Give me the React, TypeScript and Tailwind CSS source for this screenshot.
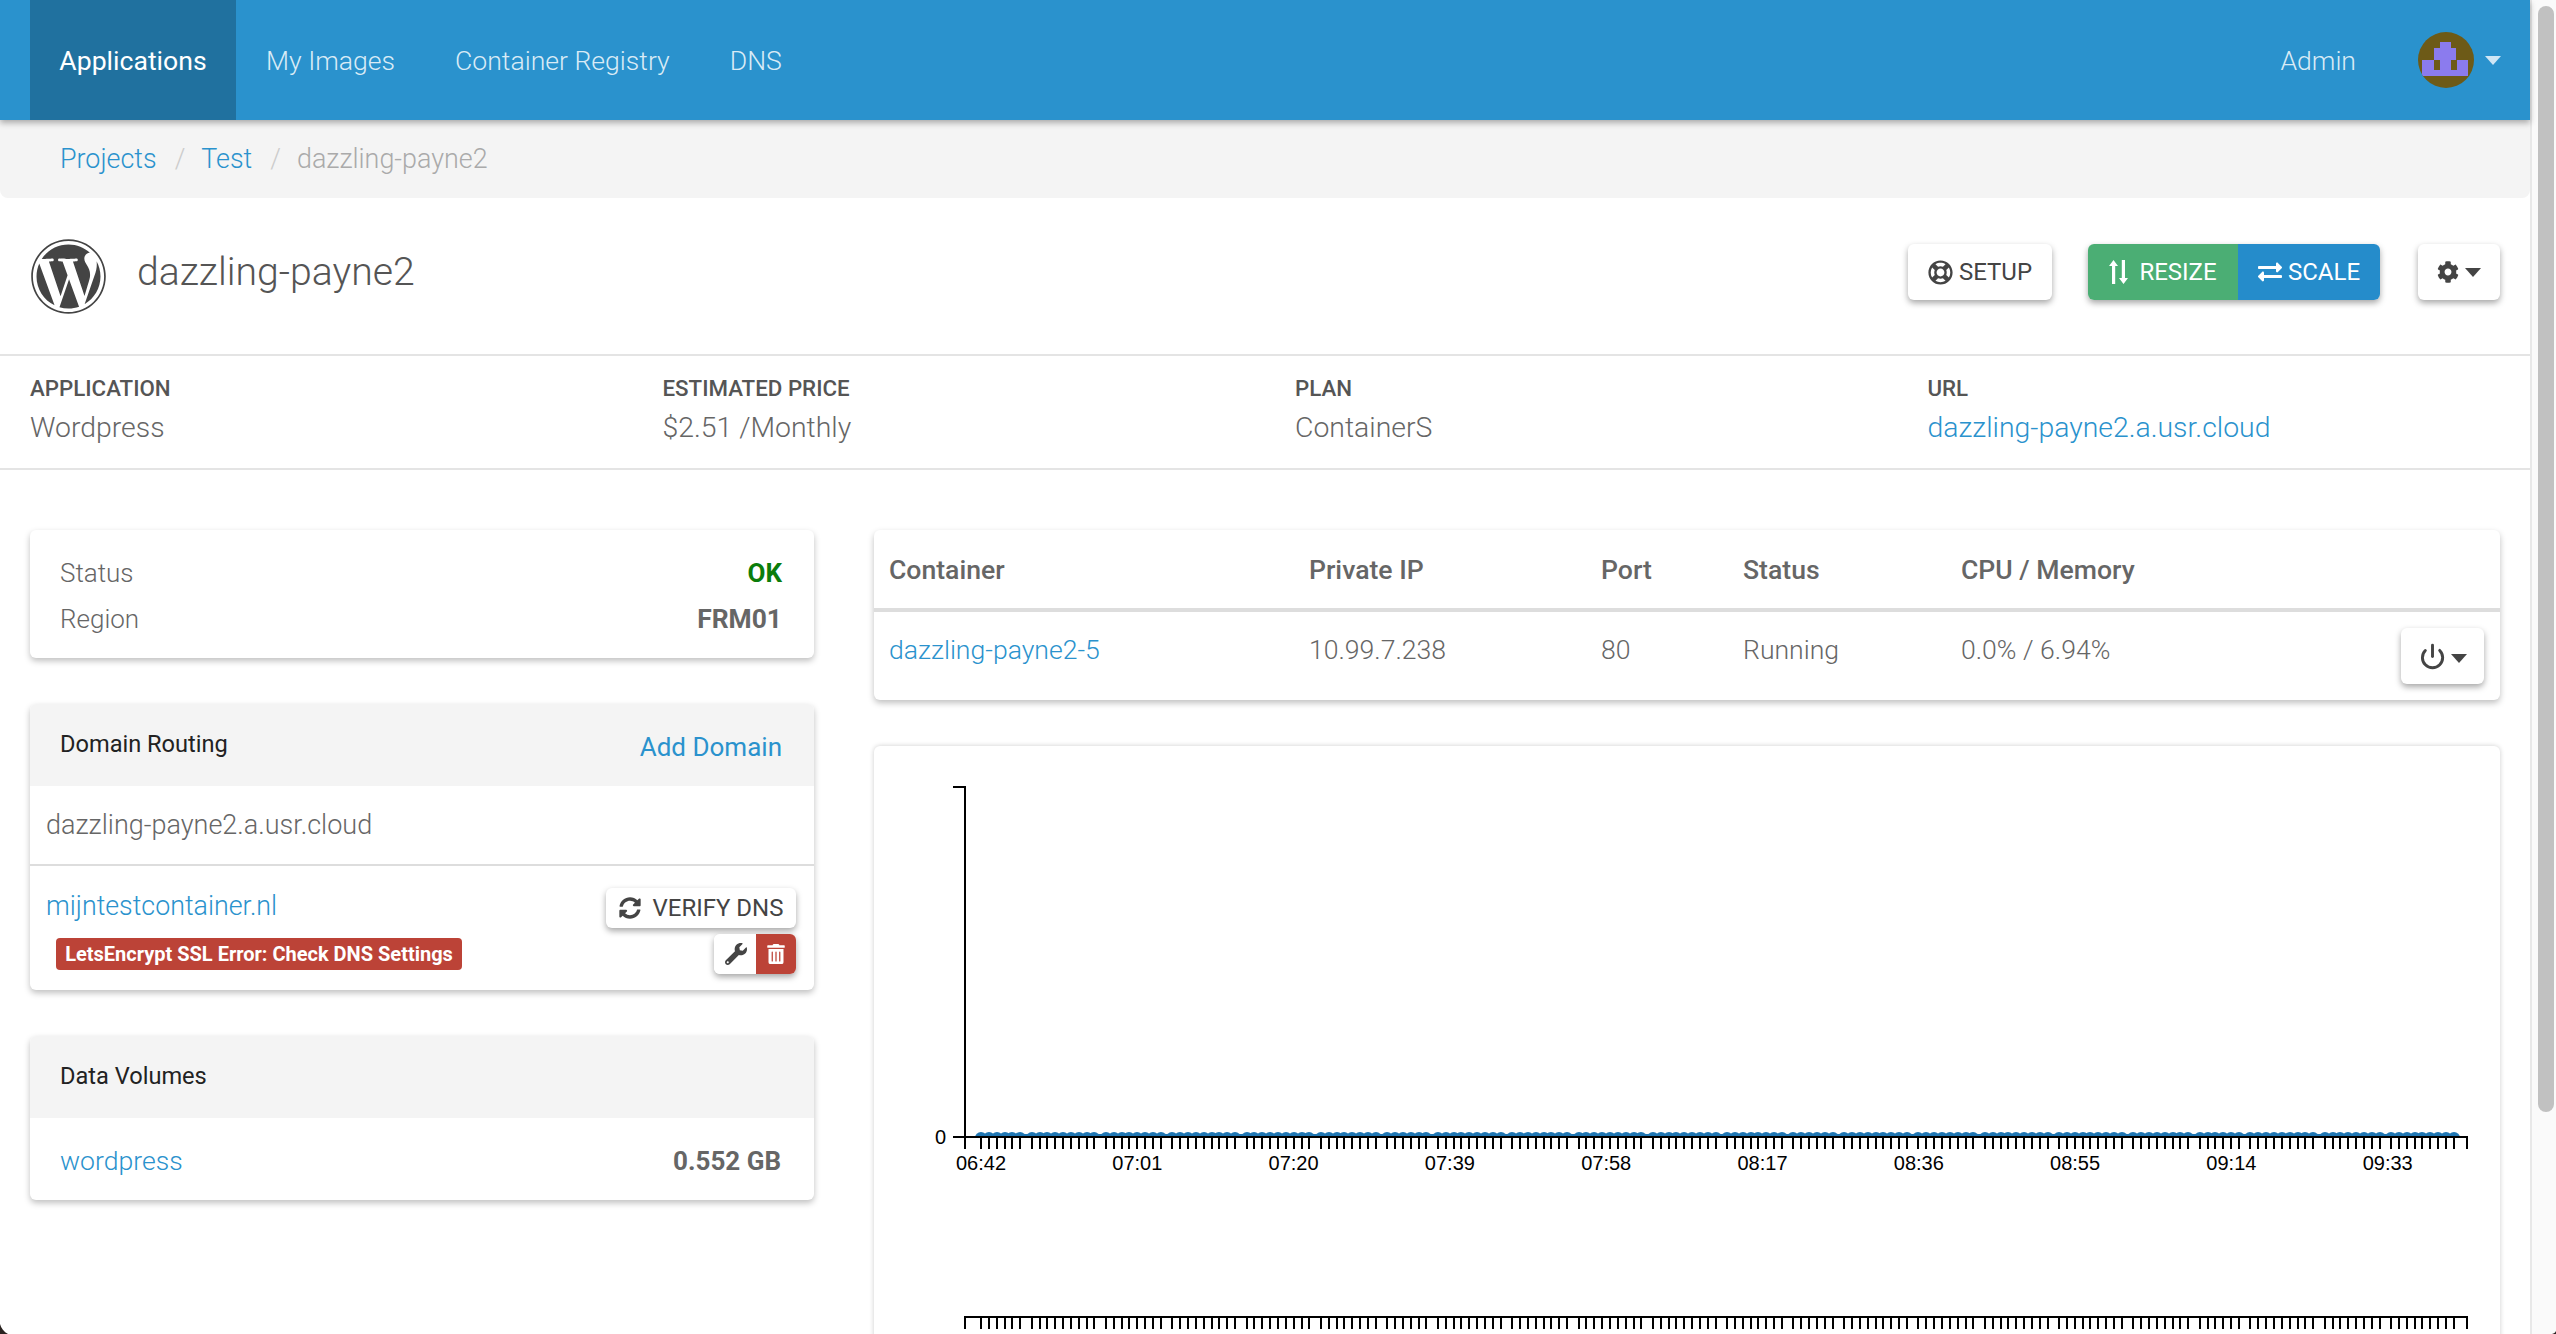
import { FaWordpress, FaRegLifeRing, FaExchangeAlt, FaCog, FaSyncAlt, FaWrench, FaTrashAlt } from "react-icons/fa";
import { Power } from "lucide-react";

const navItems = ["My Images", "Container Registry", "DNS"];
const labels = ["06:42", "07:01", "07:20", "07:39", "07:58", "08:17", "08:36", "08:55", "09:14", "09:33"];

// ticks come in bursts, the time scale leaves a small hole between them
function buildTicks() {
  const cycle = [6, 9, 8, 9, 9, 8];
  const out: number[] = [];
  let x = 981;
  let c = 0;
  let left = cycle[0];
  while (x < 2456) {
    out.push(Math.round(x));
    left--;
    if (left === 0) {
      c = (c + 1) % cycle.length;
      left = cycle[c] || 9;
      x += 3.6;
    }
    x += 7.85;
  }
  return out;
}
const ticks = buildTicks();

function Caret({ className }: { className: string }) {
  return <span className={"inline-block h-0 w-0 border-x-[8px] border-t-[9px] border-x-transparent " + className} />;
}

function Avatar() {
  return (
    <svg width="56" height="56" viewBox="0 0 56 56">
      <defs>
        <clipPath id="avatar-clip">
          <circle cx="28" cy="28" r="28" />
        </clipPath>
      </defs>
      <g clipPath="url(#avatar-clip)">
        <rect width="56" height="56" fill="#6d5a17" />
        <rect x="4" y="28" width="46" height="16" fill="#8b7bee" />
        <rect x="16" y="16" width="22" height="12" fill="#8b7bee" />
        <rect x="22" y="10" width="11" height="6" fill="#8b7bee" />
        <rect x="16" y="28" width="6" height="10" fill="#6d5a17" />
        <rect x="33" y="28" width="6" height="10" fill="#6d5a17" />
      </g>
    </svg>
  );
}

function ResizeIcon() {
  return (
    <svg width="19" height="24" viewBox="0 0 19 24" fill="#fff">
      <path d="M4.5 0l4.5 6H6.2v18H3V6H0z" />
      <path d="M14.5 24L10 18h2.8V0H16v18h3z" />
    </svg>
  );
}

function Chart() {
  return (
    <svg width="1626" height="600" viewBox="874 746 1626 600" className="block">
      <defs>
        <clipPath id="line-clip">
          <rect x="960" y="1120" width="1520" height="17" />
        </clipPath>
      </defs>
      <g clipPath="url(#line-clip)" fill="#1f77b4">
        <rect x="978" y="1134" width="1478" height="3" />
        {ticks.map((x) => (
          <circle key={x} cx={x} cy="1138" r="6" />
        ))}
      </g>
      <g fill="none" stroke="#000" strokeWidth="2">
        <path d="M953 787H965V1137" />
        <path d="M953 1137H965" />
        <path d="M965 1149V1137H2467V1149" />
        <path d="M965 1329V1317H2467V1329" />
        {ticks.map((x) => (
          <path key={x} d={`M${x} 1137V1149M${x} 1317V1329`} />
        ))}
      </g>
      <g fontFamily="'Liberation Sans', sans-serif" fontSize="20" fill="#000">
        <text x="946" y="1144" textAnchor="end">0</text>
        {labels.map((l, i) => (
          <text key={l} x={981 + i * 156.3} y="1170" textAnchor="middle">{l}</text>
        ))}
      </g>
    </svg>
  );
}

function Info({ label, children }: { label: string; children: React.ReactNode }) {
  return (
    <div className="px-[30px] pb-[3px]">
      <div className="text-[22.3px] leading-[30px] font-medium text-[#555]">{label}</div>
      <div className="mt-[5px] text-[28.4px] leading-[40px] font-light text-[#666]">{children}</div>
    </div>
  );
}

export default function App() {
  return (
    <div className="relative flex h-[1334px] w-[2556px] overflow-hidden bg-white font-[Roboto,sans-serif] text-[#666]">
      <div className="w-[2530px] shrink-0">
        <nav className="relative z-10 flex h-[120px] items-center bg-[#2a92cd] pl-[30px] pr-[29px] text-[26.6px] text-[#d9ebf6] shadow-[0_3px_6px_rgba(0,0,0,0.3)]">
          <a className="flex h-full w-[206px] items-center justify-center bg-[#20719f] pt-[2px] text-white">Applications</a>
          {navItems.map((n) => (
            <a key={n} className="flex h-full items-center px-[30px] pt-[2px] font-light">{n}</a>
          ))}
          <span className="ml-auto pt-[2px] font-light">Admin</span>
          <span className="ml-[62px]"><Avatar /></span>
          <Caret className="ml-[11px] border-t-[#cfe6f5]" />
        </nav>

        <div className="flex h-[78px] items-center rounded-b-[8px] bg-[#f4f4f4] pl-[60px] text-[26.9px] font-light">
          <a className="text-[#2a92cd]">Projects</a>
          <span className="ml-[18px] mr-[16px] text-[#ccc]">/</span>
          <a className="text-[#2a92cd]">Test</a>
          <span className="ml-[18px] mr-[16px] text-[#ccc]">/</span>
          <span className="text-[#aaa]">dazzling-payne2</span>
        </div>

        <div className="flex h-[158px] items-center border-b-2 border-[#e4e4e4] px-[30px]">
          <FaWordpress className="size-[77px] text-[#444]" />
          <h1 className="ml-[30px] -mt-[8px] text-[39.2px] font-light text-[#555]">dazzling-payne2</h1>
          <button className="ml-auto -mt-[8px] flex h-[56px] w-[144px] items-center justify-center gap-[6px] rounded-[6px] bg-white text-[24px] text-[#444] shadow-[0_3px_6px_rgba(0,0,0,0.35)]">
            <FaRegLifeRing className="size-[25px]" />
            SETUP
          </button>
          <div className="ml-[36px] -mt-[8px] flex h-[56px] overflow-hidden rounded-[6px] text-[24px] text-white shadow-[0_3px_6px_rgba(0,0,0,0.35)]">
            <button className="flex w-[150px] items-center justify-center gap-[11px] bg-[#4bae74]">
              <ResizeIcon />
              RESIZE
            </button>
            <button className="flex w-[142px] items-center justify-center gap-[6px] bg-[#258ccb]">
              <FaExchangeAlt className="size-[24px]" />
              SCALE
            </button>
          </div>
          <button className="ml-[38px] -mt-[8px] flex h-[56px] w-[82px] items-center justify-center gap-[6px] rounded-[6px] bg-white text-[#444] shadow-[0_3px_6px_rgba(0,0,0,0.35)]">
            <FaCog className="size-[22px]" />
            <Caret className="border-t-[#444]" />
          </button>
        </div>

        <div className="grid h-[114px] grid-cols-4 items-center border-b-2 border-[#e4e4e4]">
          <Info label="APPLICATION">Wordpress</Info>
          <Info label="ESTIMATED PRICE">$2.51 /Monthly</Info>
          <Info label="PLAN">ContainerS</Info>
          <Info label="URL">
            <a className="text-[#2a92cd]">dazzling-payne2.a.usr.cloud</a>
          </Info>
        </div>

        <div className="flex gap-[60px] px-[30px] pt-[60px]">
          <div className="flex w-[784px] shrink-0 flex-col gap-[46px]">
            <section className="rounded-[6px] bg-white pb-[15px] pl-[30px] pr-[32px] pt-[20px] text-[26px] font-light shadow-[0_3px_6px_rgba(0,0,0,0.25)]">
              <div className="flex h-[46px] items-center justify-between">
                <span>Status</span>
                <span className="font-bold text-[#0b7d0b]">OK</span>
              </div>
              <div className="flex h-[47px] items-center justify-between">
                <span>Region</span>
                <span className="text-[26.4px] font-bold">FRM01</span>
              </div>
            </section>

            <section className="overflow-hidden rounded-[6px] bg-white shadow-[0_3px_6px_rgba(0,0,0,0.25)]">
              <div className="flex h-[82px] items-center justify-between bg-[#f4f4f4] pl-[30px] pr-[32px]">
                <span className="text-[23.6px] text-[#222]">Domain Routing</span>
                <a className="mt-[4px] text-[26px] text-[#2a92cd]">Add Domain</a>
              </div>
              <div className="flex h-[80px] items-center border-b-2 border-[#ddd] pl-[16px] text-[27px] font-light">
                dazzling-payne2.a.usr.cloud
              </div>
              <div className="flex h-[124px] justify-between pl-[16px] pr-[18px] pt-[22px]">
                <div>
                  <a className="block h-[40px] text-[26.8px] leading-[36px] font-light text-[#2a92cd]">mijntestcontainer.nl</a>
                  <span className="ml-[10px] mt-[10px] flex h-[32px] w-[406px] items-center justify-center rounded-[4px] bg-[#bc4337] text-[20px] font-bold text-white">
                    LetsEncrypt SSL Error: Check DNS Settings
                  </span>
                </div>
                <div className="flex flex-col items-end gap-[6px]">
                  <button className="flex h-[40px] w-[190px] items-center justify-center gap-[12px] rounded-[6px] bg-white text-[24px] text-[#444] shadow-[0_3px_6px_rgba(0,0,0,0.35)]">
                    <FaSyncAlt className="size-[22px]" />
                    VERIFY DNS
                  </button>
                  <div className="flex h-[40px] w-[82px] overflow-hidden rounded-[6px] shadow-[0_3px_6px_rgba(0,0,0,0.35)]">
                    <span className="flex w-[42px] items-center justify-center bg-white pl-[2px] text-[#444]">
                      <FaWrench className="size-[22px]" />
                    </span>
                    <span className="flex w-[40px] items-center justify-center bg-[#bc4337] text-white">
                      <FaTrashAlt className="size-[20px]" />
                    </span>
                  </div>
                </div>
              </div>
            </section>

            <section className="overflow-hidden rounded-[6px] bg-white shadow-[0_3px_6px_rgba(0,0,0,0.25)]">
              <div className="flex h-[82px] items-center bg-[#f4f4f4] px-[30px] text-[23.6px] text-[#222]">Data Volumes</div>
              <div className="flex h-[82px] items-center justify-between pl-[30px] pr-[33px] pt-[4px] text-[26.6px]">
                <a className="font-light text-[#2a92cd]">wordpress</a>
                <span className="text-[26px] font-bold">0.552 GB</span>
              </div>
            </section>
          </div>

          <div className="flex w-[1626px] shrink-0 flex-col gap-[46px]">
            <section className="h-[170px] rounded-[6px] bg-white text-[26.6px] shadow-[0_3px_6px_rgba(0,0,0,0.25)]">
              <div className="flex h-[82px] items-center border-b-4 border-[#ddd] pt-[2px] font-medium">
                <span className="ml-[15px] w-[420px]">Container</span>
                <span className="w-[292px]">Private IP</span>
                <span className="w-[142px]">Port</span>
                <span className="w-[218px]">Status</span>
                <span>CPU / Memory</span>
              </div>
              <div className="relative flex h-[88px] items-start pt-[18px] font-light">
                <a className="ml-[15px] w-[420px] text-[#2a92cd]">dazzling-payne2-5</a>
                <span className="w-[292px]">10.99.7.238</span>
                <span className="w-[142px]">80</span>
                <span className="w-[218px]">Running</span>
                <span>0.0% / 6.94%</span>
                <button className="absolute right-[16px] top-[16px] flex h-[56px] w-[83px] items-center justify-center gap-[5px] rounded-[6px] bg-white text-[#444] shadow-[0_3px_6px_rgba(0,0,0,0.35)]">
                  <Power className="size-[27px]" strokeWidth={2.6} />
                  <Caret className="mt-[4px] border-t-[#444]" />
                </button>
              </div>
            </section>

            <section className="h-[600px] overflow-hidden rounded-[6px] bg-white shadow-[0_0_5px_rgba(0,0,0,0.2)]">
              <Chart />
            </section>
          </div>
        </div>
      </div>

      <div className="flex-1 border-l-2 border-[#e8e8e8] bg-[#fafafa] pl-[6px] pt-[6px]">
        <div className="h-[1106px] w-[16px] rounded-full bg-[#c1c1c1]" />
      </div>

      {/* window corners of the original capture */}
      <svg width="8" height="10" viewBox="0 0 8 10" className="absolute bottom-0 left-0">
        <path d="M0 0C1 4 4 8 8 10H0z" fill="#2a2320" />
      </svg>
      <svg width="4" height="3" viewBox="0 0 4 3" className="absolute bottom-0 right-0">
        <path d="M4 0C3 2 2 2.5 0 3H4z" fill="#2a2320" />
      </svg>
    </div>
  );
}
